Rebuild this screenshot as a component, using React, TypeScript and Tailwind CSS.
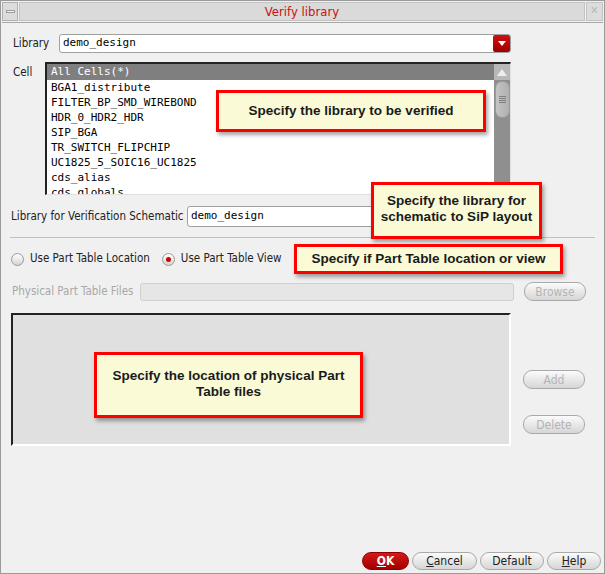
import React from "react";

const sans = { fontFamily: '"DejaVu Sans Condensed", "DejaVu Sans", sans-serif' };
const mono = { fontFamily: '"DejaVu Sans Mono", "Liberation Mono", monospace' };
const callFont = { fontFamily: '"Liberation Sans Narrow", "Liberation Sans", Arial, sans-serif' };

function Callout({ className, children }: { className: string; children: React.ReactNode }) {
  return (
    <div
      className={
        "absolute flex items-center justify-center text-center border-[3px] border-[#ff0000] bg-[#fafad6] text-[#1a1a1a] font-bold text-[13.5px] leading-[16px] shadow-[2px_3px_4px_rgba(0,0,0,0.35)] " +
        className
      }
      style={callFont}
    >
      {children}
    </div>
  );
}

function PillButton({ children, disabled, className }: { children: React.ReactNode; disabled?: boolean; className: string }) {
  return (
    <div
      className={
        "flex items-center justify-center rounded-[9px] border border-[#a9a9a9] bg-gradient-to-b from-[#fbfbfb] to-[#d6d6d6] text-[12px] " +
        (disabled ? "text-[#b4b4b4] " : "text-[#222] ") +
        className
      }
      style={sans}
    >
      {children}
    </div>
  );
}

const cells = [
  "BGA1_distribute",
  "FILTER_BP_SMD_WIREBOND",
  "HDR_0_HDR2_HDR",
  "SIP_BGA",
  "TR_SWITCH_FLIPCHIP",
  "UC1825_5_SOIC16_UC1825",
  "cds_alias",
  "cds_globals",
];

export default function App() {
  return (
    <div className="relative w-[605px] h-[574px] bg-[#f0f0f0] border border-[#9a9a9a] overflow-hidden flex flex-col" style={sans}>
      {/* title bar */}
      <div className="flex h-[21px] mt-[1px] mx-[1px] border-b border-[#a8a8a8]">
        <div className="w-[16px] h-[19px] border border-[#b0b0b0] bg-[#dcdcdc] flex items-center justify-center">
          <div className="w-[9px] h-[3px] border border-[#9a9a9a] bg-[#f4f4f4]" />
        </div>
        <div className="flex-1 h-[19px] ml-[1px] bg-[#dadada] border border-[#c4c4c4] flex items-center justify-center text-[13px] text-[#cc1010]">
          Verify library
        </div>
        <div className="w-[17px] h-[19px] ml-[1px] bg-[#dcdcdc] border border-[#c4c4c4] flex items-center justify-center text-[11px] text-[#b8b8b8]">
          ✕
        </div>
      </div>

      {/* Library row */}
      <div className="flex items-center mt-[11px] h-[19px]">
        <div className="w-[58px] pl-[12px] text-[11.5px] text-[#222]">Library</div>
        <div className="w-[452px] h-[19px] bg-white border border-[#a0a0a0] rounded-[3px] flex items-center">
          <div className="flex-1 pl-[3px] text-[11px] text-black" style={mono}>demo_design</div>
          <div className="w-[17px] h-[17px] bg-gradient-to-b from-[#d01010] to-[#a00000] rounded-[2px] flex items-center justify-center">
            <svg width="8" height="5" viewBox="0 0 8 5"><path d="M0 0h8L4 5z" fill="#fff" /></svg>
          </div>
        </div>
      </div>

      {/* Cell list */}
      <div className="flex mt-[9px]">
        <div className="w-[44px] pl-[12px] pt-[2px] text-[11.5px] text-[#222]">Cell</div>
        <div className="w-[466px] h-[133px] bg-white border-t-2 border-l-2 border-[#222] border-b border-r border-b-[#e0e0e0] border-r-[#e0e0e0] flex overflow-hidden">
          <div className="flex-1 flex flex-col text-[11px] leading-[15px] text-black" style={mono}>
            <div className="bg-[#7f7f7f] text-white pl-[4px] h-[16px] leading-[16px]">All Cells(*)</div>
            {cells.map((c) => (
              <div key={c} className="pl-[4px] h-[15px] shrink-0">{c}</div>
            ))}
          </div>
          <div className="w-[16px] bg-[#8f8f8f] flex flex-col items-center">
            <div className="h-[16px] w-[16px] bg-[#b8b8b8] flex items-center justify-center">
              <svg width="10" height="7" viewBox="0 0 10 7"><path d="M5 0L10 7H0z" fill="#eee" /></svg>
            </div>
            <div className="mt-[1px] w-[15px] h-[37px] rounded-[7px] bg-gradient-to-r from-[#c4c4c4] to-[#b0b0b0] border border-[#9a9a9a] flex flex-col items-center justify-center gap-[1px]">
              <div className="w-[7px] h-[1px] bg-[#808080]" />
              <div className="w-[7px] h-[1px] bg-[#808080]" />
              <div className="w-[7px] h-[1px] bg-[#808080]" />
              <div className="w-[7px] h-[1px] bg-[#808080]" />
            </div>
          </div>
        </div>
      </div>

      {/* Library for verification */}
      <div className="flex items-center mt-[11px] h-[21px]">
        <div className="w-[186px] pl-[10px] text-[11.5px] text-[#222] whitespace-nowrap">Library for Verification Schematic</div>
        <div className="w-[323px] h-[21px] bg-white border border-[#a0a0a0] rounded-[3px] flex items-center pl-[3px] text-[11px] text-black" style={mono}>
          demo_design
        </div>
      </div>

      {/* separator */}
      <div className="mx-[9px] mt-[10px] h-[1px] bg-[#c0c0c0]" />

      {/* radios */}
      <div className="flex items-center mt-[14px] h-[14px] pl-[10px] text-[11.5px] text-[#222]">
        <div className="w-[13px] h-[13px] rounded-full border border-[#9a9a9a] bg-gradient-to-b from-[#ffffff] to-[#d4d4d4]" />
        <div className="ml-[6px]">Use Part Table Location</div>
        <div className="ml-[12px] w-[13px] h-[13px] rounded-full border border-[#9a9a9a] bg-gradient-to-b from-[#ffffff] to-[#d4d4d4] flex items-center justify-center">
          <div className="w-[5px] h-[5px] rounded-full bg-[#d00000]" />
        </div>
        <div className="ml-[6px]">Use Part Table View</div>
      </div>

      {/* physical files row */}
      <div className="flex items-center mt-[16px] h-[19px]">
        <div className="w-[139px] pl-[11px] text-[11.5px] text-[#a8a8a8] whitespace-nowrap">Physical Part Table Files</div>
        <div className="w-[374px] h-[18px] bg-[#e6e6e6] border border-[#d0d0d0] rounded-[3px]" />
        <PillButton disabled className="ml-[10px] w-[62px] h-[19px]">Browse</PillButton>
      </div>

      {/* big list + buttons */}
      <div className="flex mt-[12px]">
        <div className="ml-[10px] w-[500px] h-[133px] bg-[#e0e0e0] border-t-2 border-l-2 border-[#222] border-b-2 border-r-2 border-b-white border-r-white" />
        <div className="ml-[12px] flex flex-col">
          <PillButton disabled className="mt-[57px] w-[62px] h-[19px]">Add</PillButton>
          <PillButton disabled className="mt-[26px] w-[62px] h-[19px]">Delete</PillButton>
        </div>
      </div>

      <div className="flex-1" />

      {/* bottom buttons */}
      <div className="flex justify-end items-center gap-[3px] pr-[3px] mb-[3px] h-[18px]">
        <div className="w-[47px] h-[18px] rounded-[9px] bg-gradient-to-b from-[#d81818] to-[#a00000] border border-[#900000] flex items-center justify-center text-white font-bold text-[12px]">
          <span className="underline">O</span>K
        </div>
        <PillButton className="w-[65px] h-[18px]"><span className="underline">C</span>ancel</PillButton>
        <PillButton className="w-[64px] h-[18px]">Default</PillButton>
        <PillButton className="w-[54px] h-[18px]"><span className="underline">H</span>elp</PillButton>
      </div>

      {/* callouts */}
      <Callout className="left-[215px] top-[89px] w-[270px] h-[42px]">Specify the library to be verified</Callout>
      <Callout className="left-[370px] top-[181px] w-[171px] h-[57px]">
        <span className="-mt-[3px]">Specify the library for<br />schematic to SiP layout</span>
      </Callout>
      <Callout className="left-[293px] top-[243px] w-[269px] h-[30px]">Specify if Part Table location or view</Callout>
      <Callout className="left-[93px] top-[351px] w-[269px] h-[66px]">
        <span className="-mt-[2px]">Specify the location of physical Part<br />Table files</span>
      </Callout>
    </div>
  );
}
